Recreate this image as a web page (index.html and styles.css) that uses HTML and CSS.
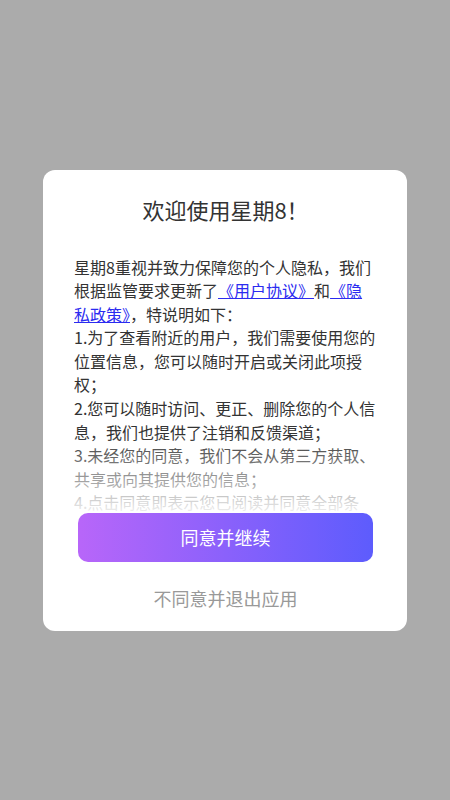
FILE: index.html
```html
<!DOCTYPE html>
<html lang="zh-CN">
<head>
    <meta charset="UTF-8">
    <meta name="viewport" content="width=device-width, initial-scale=1.0">
    <title>隐私政策</title>
    <link rel="stylesheet" href="styles.css">
</head>
<body>
    <div class="dialog">
        <div class="title">欢迎使用星期8！</div>
        <div class="content">
            <p>星期8重视并致力保障您的个人隐私，我们根据监管要求更新了<a href="#">《用户协议》</a>和<a href="#">《隐私政策》</a>，特说明如下：</p>
            <p>1.为了查看附近的用户，我们需要使用您的位置信息，您可以随时开启或关闭此项授权；</p>
            <p>2.您可以随时访问、更正、删除您的个人信息，我们也提供了注销和反馈渠道；</p>
            <p>3.未经您的同意，我们不会从第三方获取、共享或向其提供您的信息；</p>
            <p>4.点击同意即表示您已阅读并同意全部条款，开始使用我们的产品和服务。</p>
            <div class="fade"></div>
        </div>
        <button class="agree">同意并继续</button>
        <div class="disagree">不同意并退出应用</div>
    </div>
</body>
</html>
```

FILE: styles.css
```css
html, body {
    margin: 0;
    height: 100%;
}

body {
    background-color: #ababab;
    font-family: "Noto Sans CJK SC", "Noto Sans", sans-serif;
    display: flex;
    align-items: center;
    justify-content: center;
}

.dialog {
    width: 364px;
    box-sizing: border-box;
    background-color: #fff;
    border-radius: 12px;
    padding: 24px 30px 21px 31px;
    display: flex;
    flex-direction: column;
}

.title {
    font-size: 22px;
    line-height: 30px;
    color: #333;
    text-align: center;
}

.content {
    position: relative;
    margin-top: 32px;
    height: 257px;
    overflow: hidden;
    font-size: 16px;
    line-height: 23.6px;
    color: #333;
}

.content p {
    margin: 0;
}

.content a {
    color: #2b2bf0;
    text-decoration: underline;
}

.fade {
    position: absolute;
    left: 0;
    right: 0;
    bottom: 0;
    height: 78px;
    background: linear-gradient(rgba(255, 255, 255, 0), rgba(255, 255, 255, 0.93));
}

.agree {
    align-self: center;
    width: 295px;
    height: 49px;
    border: none;
    border-radius: 10px;
    background: linear-gradient(to right, #b866f9, #5d5cfd);
    color: #fff;
    font-family: inherit;
    font-size: 18px;
    cursor: pointer;
}

.disagree {
    margin-top: 24px;
    font-size: 18px;
    line-height: 24px;
    color: #999;
    text-align: center;
}
```
